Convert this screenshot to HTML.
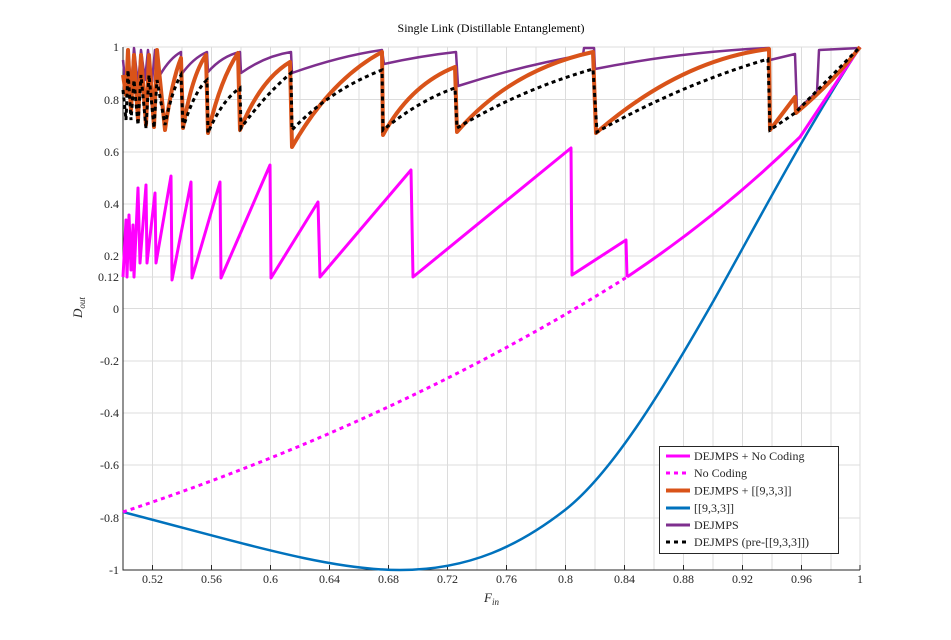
<!DOCTYPE html>
<html><head><meta charset="utf-8"><style>
html,body{margin:0;padding:0;background:#fff;}
svg{display:block;font-family:"Liberation Serif",serif;}
</style></head><body>
<svg width="951" height="640" viewBox="0 0 951 640" xmlns="http://www.w3.org/2000/svg">
<rect width="951" height="640" fill="#fff"/>
<g stroke="#dcdcdc" stroke-width="1">
<path d="M152.5 47V570M182 47V570M211.5 47V570M241 47V570M270.5 47V570M300 47V570M329.5 47V570M359 47V570M388.5 47V570M418 47V570M447.5 47V570M477 47V570M506.5 47V570M536 47V570M565.5 47V570M595 47V570M624.5 47V570M654 47V570M683.5 47V570M713 47V570M742.5 47V570M772 47V570M801.5 47V570M831 47V570M860 47V570"/>
<path d="M123 47H860M123 99.5H860M123 152H860M123 204H860M123 256H860M123 277H860M123 308.5H860M123 361H860M123 413H860M123 465H860M123 518H860M123 570H860"/>
</g>
<path d="M123 47V570H860" fill="none" stroke="#262626" stroke-width="1"/>
<g stroke="#262626" stroke-width="1">
<path d="M152.5 570v-5M211.5 570v-5M270.5 570v-5M329.5 570v-5M388.5 570v-5M447.5 570v-5M506.5 570v-5M565.5 570v-5M624.5 570v-5M683.5 570v-5M742.5 570v-5M801.5 570v-5M860 570v-5"/>
</g>
<g font-size="12" fill="#262626" text-anchor="middle">
<text x="152.5" y="583">0.52</text><text x="211.5" y="583">0.56</text><text x="270.5" y="583">0.6</text><text x="329.5" y="583">0.64</text><text x="388.5" y="583">0.68</text><text x="447.5" y="583">0.72</text><text x="506.5" y="583">0.76</text><text x="565.5" y="583">0.8</text><text x="624.5" y="583">0.84</text><text x="683.5" y="583">0.88</text><text x="742.5" y="583">0.92</text><text x="801.5" y="583">0.96</text><text x="860" y="583">1</text>
</g>
<g font-size="12" fill="#262626" text-anchor="end">
<text x="119" y="51">1</text><text x="119" y="104">0.8</text><text x="119" y="156">0.6</text><text x="119" y="208">0.4</text><text x="119" y="260">0.2</text><text x="119" y="281">0.12</text><text x="119" y="313">0</text><text x="119" y="365">-0.2</text><text x="119" y="417">-0.4</text><text x="119" y="469">-0.6</text><text x="119" y="522">-0.8</text><text x="119" y="574">-1</text>
</g>
<text x="491" y="32" font-size="12" text-anchor="middle" fill="#000">Single Link (Distillable Entanglement)</text>
<text x="484" y="602" font-size="13" font-style="italic" fill="#262626">F<tspan font-size="9" dy="3">in</tspan></text>
<text transform="translate(82,318) rotate(-90)" font-size="13" font-style="italic" fill="#262626">D<tspan font-size="9" dy="3">out</tspan></text>

<path d="M123 512C250 545 330 570 400 570C470 570 520 545 565 510C610 475 660 395 714 300C760 218 800 140 860 47" fill="none" stroke="#0072BD" stroke-width="2.5"/>
<path d="M123 512Q400 420 627 277" fill="none" stroke="#FF00FF" stroke-width="3" stroke-dasharray="4,4"/>
<polyline points="123,277 126,220 127,277 129,215 131,270 133,225 134,277 138,188 140,263 146,185 147,263 155,193 156,263 171,176 172,280 191,182 192,278 220,182 221,278 270,165 271,278 318,202 320,277 411,170 413,277 571,148 572,275 626,240 627,277" fill="none" stroke="#FF00FF" stroke-width="3" stroke-linejoin="round"/>
<path d="M627 277Q720 215 800 137L860 47" fill="none" stroke="#FF00FF" stroke-width="3"/>
<path d="M123 60L126 90L128 50L131 90L134 48L138 85L141 50L145 80L148 50L152 82L155 50L160 75Q170 58 181 52L181 75Q193 58 207 52L208 72Q222 56 240 52L241 73Q265 56 291 52L292 73Q340 56 382 50L384 64Q420 56 456 52L458 86Q520 66 583 55L584 48L594 48L595 69Q680 52 769 48L770 60L795 54L797 110L817 92L819 50L860 48" fill="none" stroke="#7E2F8E" stroke-width="2.5" stroke-linejoin="round"/>
<path d="M123 75L126 95L128 50L131 110L134 55L138 120L141 55L146 125L149 55L154 127L157 50L165 130Q172 80 181 58L183 128Q192 75 206 55L208 133Q220 80 238 53L240 130Q260 80 290 62L292 147Q330 80 382 52L383 135Q410 85 455 67L457 132Q510 70 593 52L596 133Q680 60 769 49L770 130L795 97L796 113Q835 80 860 47" fill="none" stroke="#D95319" stroke-width="4" stroke-linejoin="round"/>
<path d="M123 90L126 120L128 70L131 120L134 80L138 125L141 75L146 128L149 75L154 128L157 80L165 125Q172 90 181 75L183 128Q195 90 207 80L208 133Q222 100 240 88L241 128Q265 95 291 73L292 130Q330 90 382 70L383 130Q420 100 455 88L457 128Q520 90 593 69L597 132Q680 85 768 59L770 130L795 113L860 47" fill="none" stroke="#000" stroke-width="3" stroke-dasharray="4,3.5"/>

<rect x="659.5" y="446.5" width="179" height="107" fill="#fff" stroke="#262626" stroke-width="1"/>
<g stroke-width="3">
<line x1="666" y1="456" x2="690" y2="456" stroke="#FF00FF"/>
<line x1="666" y1="473" x2="690" y2="473" stroke="#FF00FF" stroke-dasharray="4,4"/>
<line x1="666" y1="490.5" x2="690" y2="490.5" stroke="#D95319" stroke-width="4"/>
<line x1="666" y1="508" x2="690" y2="508" stroke="#0072BD"/>
<line x1="666" y1="525" x2="690" y2="525" stroke="#7E2F8E"/>
<line x1="666" y1="542" x2="690" y2="542" stroke="#000" stroke-dasharray="4,4"/>
</g>
<g font-size="12" fill="#262626">
<text x="694" y="460">DEJMPS + No Coding</text>
<text x="694" y="477">No Coding</text>
<text x="694" y="494.5">DEJMPS + [[9,3,3]]</text>
<text x="694" y="512">[[9,3,3]]</text>
<text x="694" y="529">DEJMPS</text>
<text x="694" y="546">DEJMPS (pre-[[9,3,3]])</text>
</g>
</svg>
</body></html>
